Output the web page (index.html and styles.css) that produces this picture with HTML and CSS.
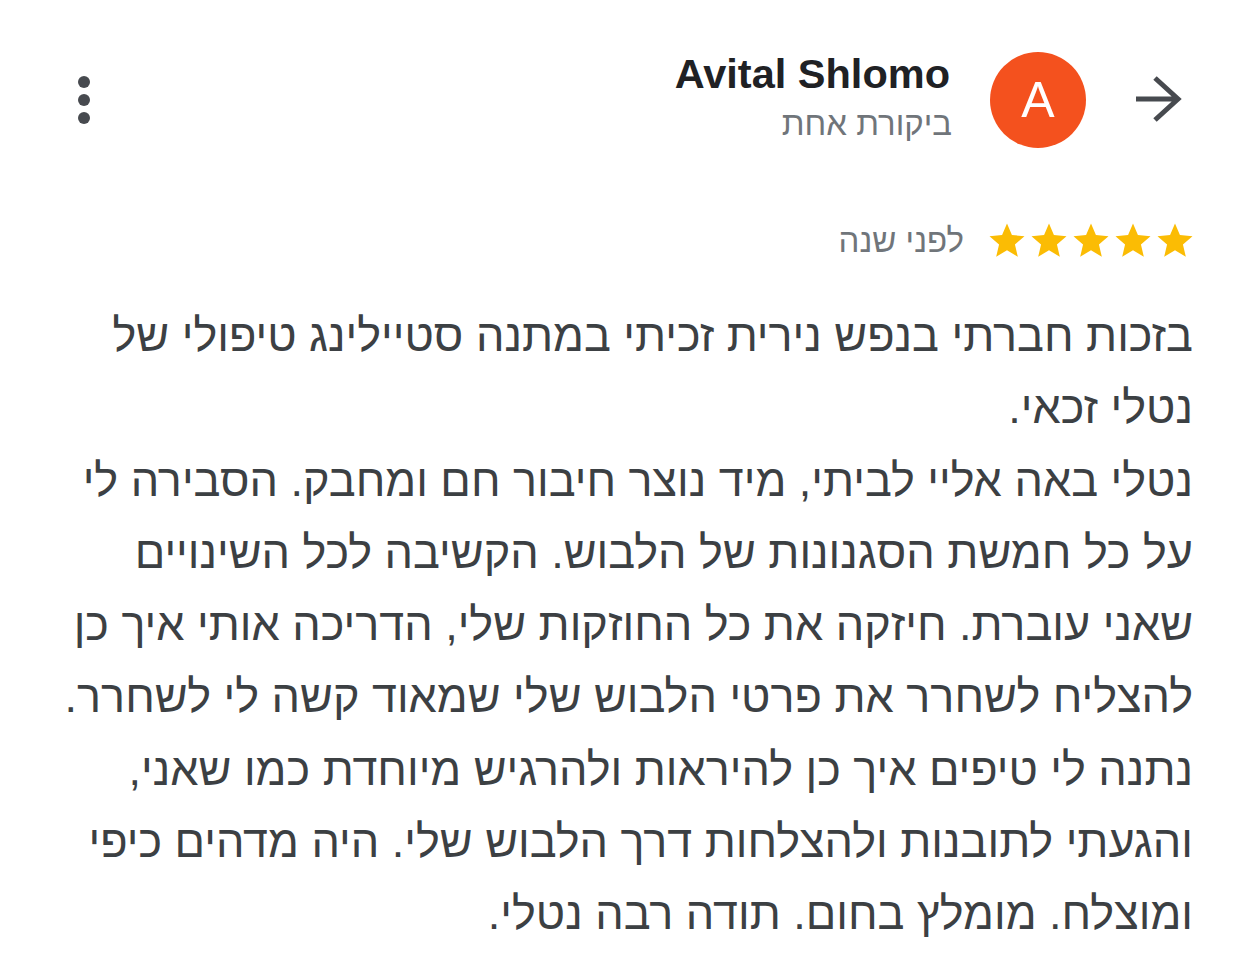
FILE: index.html
```html
<!DOCTYPE html>
<html lang="he" dir="rtl">
<head>
<meta charset="utf-8">
<link rel="stylesheet" href="styles.css">
</head>
<body>
<div class="review">
  <div class="header">
    <svg class="back" viewBox="0 0 48 48" width="48" height="48"><path d="M2 23h42M21 2l23 21-23 21" fill="none" stroke="#474a4f" stroke-width="5"/></svg>
    <div class="avatar">A</div>
    <div class="who">
      <div class="name">Avital Shlomo</div>
      <div class="count">ביקורת אחת</div>
    </div>
    <svg class="more" viewBox="0 0 24 24" width="72" height="72"><circle cx="12" cy="6" r="2" fill="#474a4f"/><circle cx="12" cy="12" r="2" fill="#474a4f"/><circle cx="12" cy="18" r="2" fill="#474a4f"/></svg>
  </div>
  <div class="rating">
    <div class="stars">
      <svg viewBox="0 0 24 24" width="42" height="42"><path d="M12 17.27L18.18 21l-1.64-7.03L22 9.24l-7.19-.61L12 2 9.19 8.63 2 9.24l5.46 4.73L5.82 21z" fill="#fbbc04"/></svg>
      <svg viewBox="0 0 24 24" width="42" height="42"><path d="M12 17.27L18.18 21l-1.64-7.03L22 9.24l-7.19-.61L12 2 9.19 8.63 2 9.24l5.46 4.73L5.82 21z" fill="#fbbc04"/></svg>
      <svg viewBox="0 0 24 24" width="42" height="42"><path d="M12 17.27L18.18 21l-1.64-7.03L22 9.24l-7.19-.61L12 2 9.19 8.63 2 9.24l5.46 4.73L5.82 21z" fill="#fbbc04"/></svg>
      <svg viewBox="0 0 24 24" width="42" height="42"><path d="M12 17.27L18.18 21l-1.64-7.03L22 9.24l-7.19-.61L12 2 9.19 8.63 2 9.24l5.46 4.73L5.82 21z" fill="#fbbc04"/></svg>
      <svg viewBox="0 0 24 24" width="42" height="42"><path d="M12 17.27L18.18 21l-1.64-7.03L22 9.24l-7.19-.61L12 2 9.19 8.63 2 9.24l5.46 4.73L5.82 21z" fill="#fbbc04"/></svg>
    </div>
    <div class="when">לפני שנה</div>
  </div>
  <p class="text">בזכות חברתי בנפש נירית זכיתי במתנה סטיילינג טיפולי של נטלי זכאי.<br>נטלי באה אליי לביתי, מיד נוצר חיבור חם ומחבק. הסבירה לי על כל חמשת הסגנונות של הלבוש. הקשיבה לכל השינויים שאני עוברת. חיזקה את כל החוזקות שלי, הדריכה אותי איך כן להצליח לשחרר את פרטי הלבוש שלי שמאוד קשה לי לשחרר. נתנה לי טיפים איך כן להיראות ולהרגיש מיוחדת כמו שאני, והגעתי לתובנות ולהצלחות דרך הלבוש שלי. היה מדהים כיפי ומוצלח. מומלץ בחום. תודה רבה נטלי.</p>
</div>
</body>
</html>
```
FILE: styles.css
```css
html, body {
  margin: 0;
  background: #ffffff;
}
body {
  font-family: "Liberation Sans", Arial, sans-serif;
  color: #3c4043;
}
.review {
  padding: 52px 49px 0 60px;
}
.header {
  display: flex;
  align-items: center;
  height: 96px;
  padding-right: 11px;
}
.back {
  display: block;
  margin-left: 48px;
}
.avatar {
  width: 96px;
  height: 96px;
  border-radius: 50%;
  background: #f4511e;
  color: #fff;
  font-size: 50px;
  line-height: 96px;
  text-align: center;
  margin-left: 38px;
}
.who {
  display: flex;
  flex-direction: column;
}
.name {
  font-size: 41.5px;
  font-weight: bold;
  color: #202124;
  line-height: 35px;
  direction: ltr;
  text-align: right;
  margin-right: 2px;
}
.count {
  font-size: 33px;
  color: #70757a;
  line-height: 40px;
  margin-top: 13px;
}
.more {
  display: block;
  margin-right: auto;
  margin-left: -12px;
}
.rating {
  display: flex;
  align-items: center;
  margin-top: 72px;
  margin-right: -3px;
}
.stars {
  display: flex;
  direction: ltr;
}
.stars svg {
  display: block;
}
.when {
  font-size: 33px;
  color: #70757a;
  margin-right: 22px;
}
.text {
  margin: 38px 0 0 0;
  font-size: 45px;
  line-height: 72.3px;
  color: #3c4043;
}
```
